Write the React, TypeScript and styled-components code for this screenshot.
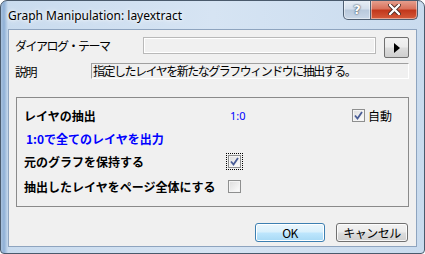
import styled, { createGlobalStyle } from 'styled-components'

const GlobalStyle = createGlobalStyle`
  html, body {
    margin: 0;
    padding: 0;
    background: #ffffff;
  }
  body {
    font-family: "Noto Sans CJK JP", "Noto Sans", sans-serif;
    font-size: 12px;
    color: #000000;
  }
`

const Window = styled.div`
  width: 425px;
  height: 254px;
  box-sizing: border-box;
  border: 1px solid #4a5a6c;
  border-radius: 7px 7px 4px 4px;
  background: linear-gradient(90deg, #a9c2de 0px, #8fb0d6 3px, #c9dbee 7px, #d6e4f3 50%, #c9dbee 100%);
  display: flex;
  flex-direction: column;
  padding: 0 7px 6px 7px;
  overflow: hidden;
`

const TitleBar = styled.div`
  height: 28px;
  display: flex;
  align-items: flex-start;
  justify-content: space-between;
  flex-shrink: 0;
`

const Title = styled.div`
  font-family: "Noto Sans", "Liberation Sans", sans-serif;
  font-size: 12px;
  line-height: 16px;
  padding-top: 7px;
  color: #000000;
  text-shadow: 0 0 6px #ffffff, 0 0 3px #ffffff;
`

const CaptionButtons = styled.div`
  display: flex;
  margin-top: -1px;
  margin-right: -1px;
`

const CaptionButton = styled.div<{ $close?: boolean }>`
  width: ${p => (p.$close ? '47px' : '28px')};
  height: 20px;
  box-sizing: border-box;
  border: 1px solid #4f5f72;
  border-top: none;
  ${p => (p.$close ? 'border-left: none;' : '')}
  border-radius: ${p => (p.$close ? '0 0 5px 0' : '0 0 0 5px')};
  background: ${p =>
    p.$close
      ? 'linear-gradient(180deg, #e7a493 0%, #d9735d 45%, #c2381c 55%, #d55b3b 100%)'
      : 'linear-gradient(180deg, #e9eff6 0%, #d4dfec 45%, #b9c9dc 55%, #c9d7e7 100%)'};
  box-shadow: inset 0 0 0 1px rgba(255, 255, 255, 0.45);
  display: flex;
  align-items: center;
  justify-content: center;
  color: #ffffff;
  font-family: "DejaVu Sans", sans-serif;
  font-weight: bold;
  font-size: 13px;
  text-shadow: 0 0 2px #3b4a5c, 0 0 1px #3b4a5c;
`

const Client = styled.div`
  flex: 1;
  background: #f0f0f0;
  border: 1px solid #8ea4bf;
  display: flex;
  flex-direction: column;
  padding: 7px 7px 0 6px;
`

const ThemeRow = styled.div`
  display: flex;
  align-items: flex-start;
  height: 21px;
`

const FieldLabel = styled.div<{ $width: number }>`
  width: ${p => p.$width}px;
  flex-shrink: 0;
  font-size: 12px;
  line-height: 15px;
  letter-spacing: -1.5px;
  padding-top: ${p => (p.$width > 100 ? 1 : 0)}px;
`

const ThemeInput = styled.div`
  width: 233px;
  height: 17px;
  box-sizing: border-box;
  border: 1px solid #b9b9b9;
  background: #f0f0f0;
  box-shadow: inset 0 0 0 1px #ffffff;
`

const ArrowButton = styled.div`
  width: 25px;
  height: 21px;
  margin-left: 8px;
  box-sizing: border-box;
  border: 1px solid #707070;
  border-radius: 2px;
  background: linear-gradient(180deg, #f2f2f2 0%, #ebebeb 48%, #dddddd 52%, #cfcfcf 100%);
  display: flex;
  align-items: center;
  justify-content: center;
`

const DescRow = styled.div`
  display: flex;
  align-items: center;
  margin-top: 5px;
  height: 16px;
`

const DescBox = styled.div`
  flex: 1;
  height: 16px;
  box-sizing: border-box;
  border-top: 1px solid #a0a0a0;
  border-left: 1px solid #a0a0a0;
  border-right: 1px solid #ffffff;
  border-bottom: 1px solid #ffffff;
  font-size: 12px;
  line-height: 14px;
  letter-spacing: -1.5px;
  white-space: nowrap;
  overflow: hidden;
  padding-left: 1px;
`

const GroupBox = styled.div`
  margin: 18px 0 0 1px;
  height: 110px;
  box-sizing: border-box;
  border: 1px solid #8a8a8a;
  padding: 6px 7px 0 7px;
  display: flex;
  flex-direction: column;
`

const OptionRow = styled.div<{ $height: number }>`
  height: ${p => p.$height}px;
  display: flex;
  align-items: center;
`

const OptionLabel = styled.div<{ $blue?: boolean }>`
  width: 202px;
  flex-shrink: 0;
  font-weight: bold;
  font-size: 12px;
  color: ${p => (p.$blue ? '#0000ff' : '#000000')};
  white-space: nowrap;
  padding-left: ${p => (p.$blue ? 2 : 0)}px;
`

const Value = styled.div`
  width: 120px;
  padding-left: 4px;
  color: #0000ff;
  font-family: "Noto Sans", "Liberation Sans", sans-serif;
  font-size: 11px;
`

const CheckWrap = styled.div<{ $focus?: boolean }>`
  display: flex;
  align-items: center;
  gap: 3px;
  padding: 1px;
  border: 1px dotted ${p => (p.$focus ? '#000000' : 'transparent')};
`

const Box = styled.div`
  width: 13px;
  height: 13px;
  box-sizing: border-box;
  border: 1px solid #8e8f8f;
  background: linear-gradient(135deg, #dcdcdc 0%, #f0f0f0 60%, #ffffff 100%);
  box-shadow: inset 0 0 0 1px #f4f4f4;
  display: flex;
  align-items: center;
  justify-content: center;
`

const CheckText = styled.span`
  font-size: 12px;
`

const ButtonRow = styled.div`
  display: flex;
  justify-content: flex-end;
  gap: 11px;
  margin-top: 16px;
  padding-right: 1px;
`

const DialogButton = styled.div<{ $default?: boolean; $width: number }>`
  width: ${p => p.$width}px;
  height: 19px;
  box-sizing: border-box;
  border: 1px solid ${p => (p.$default ? '#3c7fb1' : '#707070')};
  border-radius: 3px;
  background: ${p =>
    p.$default
      ? 'linear-gradient(180deg, #eaf6fd 0%, #d9f0fc 48%, #bee6fd 52%, #a7d9f5 100%)'
      : 'linear-gradient(180deg, #f2f2f2 0%, #ebebeb 48%, #dddddd 52%, #cfcfcf 100%)'};
  box-shadow: inset 0 0 0 1px ${p => (p.$default ? '#ffffff' : 'rgba(255,255,255,0.8)')};
  display: flex;
  align-items: center;
  justify-content: center;
  font-size: 12px;
  letter-spacing: -0.5px;
`

function Check({ checked, focus, label }: { checked: boolean; focus?: boolean; label?: string }) {
  return (
    <CheckWrap $focus={focus}>
      <Box>
        {checked && (
          <svg width="9" height="9" viewBox="0 0 9 9">
            <path d="M1 4.5 L3.5 7.5 L8 1" fill="none" stroke="#4a5d96" strokeWidth="1.8" />
          </svg>
        )}
      </Box>
      {label && <CheckText>{label}</CheckText>}
    </CheckWrap>
  )
}

export default function App() {
  return (
    <>
      <GlobalStyle />
      <Window>
        <TitleBar>
          <Title>Graph Manipulation: layextract</Title>
          <CaptionButtons>
            <CaptionButton>?</CaptionButton>
            <CaptionButton $close>
              <svg width="13" height="11" viewBox="0 0 13 11">
                <path d="M2 1 L11 10 M11 1 L2 10" stroke="#4a2a22" strokeWidth="4" strokeLinecap="round" />
                <path d="M2 1 L11 10 M11 1 L2 10" stroke="#ffffff" strokeWidth="2.4" strokeLinecap="round" />
              </svg>
            </CaptionButton>
          </CaptionButtons>
        </TitleBar>
        <Client>
          <ThemeRow>
            <FieldLabel $width={128}>ダイアログ・テーマ</FieldLabel>
            <ThemeInput />
            <ArrowButton>
              <svg width="8" height="10" viewBox="0 0 8 10">
                <path d="M1 0 L7 5 L1 10 Z" fill="#000000" />
              </svg>
            </ArrowButton>
          </ThemeRow>
          <DescRow>
            <FieldLabel $width={76}>説明</FieldLabel>
            <DescBox>指定したレイヤを新たなグラフウィンドウに抽出する。</DescBox>
          </DescRow>
          <GroupBox>
            <OptionRow $height={23}>
              <OptionLabel>レイヤの抽出</OptionLabel>
              <Value>1:0</Value>
              <Check checked label="自動" />
            </OptionRow>
            <OptionRow $height={23}>
              <OptionLabel $blue>1:0で全てのレイヤを出力</OptionLabel>
            </OptionRow>
            <OptionRow $height={23}>
              <OptionLabel>元のグラフを保持する</OptionLabel>
              <Check checked focus />
            </OptionRow>
            <OptionRow $height={26}>
              <OptionLabel>抽出したレイヤをページ全体にする</OptionLabel>
              <Check checked={false} />
            </OptionRow>
          </GroupBox>
          <ButtonRow>
            <DialogButton $default $width={70}>OK</DialogButton>
            <DialogButton $width={72}>キャンセル</DialogButton>
          </ButtonRow>
        </Client>
      </Window>
    </>
  )
}
